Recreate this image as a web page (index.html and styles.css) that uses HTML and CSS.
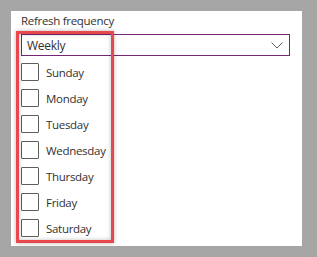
FILE: index.html
```html
<!DOCTYPE html>
<html lang="en">
<head>
    <meta charset="UTF-8">
    <title>Refresh frequency</title>
    <link rel="stylesheet" href="styles.css">
</head>
<body>
    <div class="panel">
        <div class="label">Refresh frequency</div>

        <!-- dropdown -->
        <div class="dropdown">
            <span class="dropdown-value">Weekly</span>
            <svg class="chevron" width="12" height="7" viewBox="0 0 12 7">
                <path d="M0.5 0.5 L6 6 L11.5 0.5" fill="none" stroke="#605e5c" stroke-width="1"/>
            </svg>
        </div>

        <!-- days -->
        <ul class="days">
            <li class="day"><span class="box"></span>Sunday</li>
            <li class="day"><span class="box"></span>Monday</li>
            <li class="day"><span class="box"></span>Tuesday</li>
            <li class="day"><span class="box"></span>Wednesday</li>
            <li class="day"><span class="box"></span>Thursday</li>
            <li class="day"><span class="box"></span>Friday</li>
            <li class="day"><span class="box"></span>Saturday</li>
        </ul>

        <!-- annotation highlight -->
        <div class="highlight"></div>
    </div>
</body>
</html>
```

FILE: styles.css
```css
/* base */
body {
    margin: 0;
    padding: 11px;
    background-color: #a6a6a6;
    font-family: "Open Sans", "Noto Sans", sans-serif;
    color: #323130;
}

.panel {
    position: relative;
    width: 291px;
    height: 235px;
    padding: 2px 0 0 10px;
    box-sizing: border-box;
    background-color: #fff;
}

.label {
    font-size: 11.5px;
    line-height: 16px;
    letter-spacing: -0.3px;
}

/* dropdown */
.dropdown {
    display: flex;
    align-items: center;
    justify-content: space-between;
    width: 269px;
    height: 22px;
    margin-top: 5px;
    padding: 0 6px 0 5px;
    box-sizing: border-box;
    border: 1px solid #742774;
}

.dropdown-value {
    font-size: 12px;
    letter-spacing: -0.3px;
}

.chevron {
    display: block;
}

/* list of days */
.days {
    list-style: none;
    margin: 7px 0 0;
    padding: 0;
    display: flex;
    flex-direction: column;
    gap: 8px;
}

.day {
    display: flex;
    align-items: center;
    height: 18px;
    font-size: 11.5px;
    letter-spacing: -0.3px;
}

.box {
    width: 18px;
    height: 18px;
    box-sizing: border-box;
    border: 1px solid #605e5c;
    border-radius: 1px;
    margin-right: 7px;
    flex-shrink: 0;
}

/* red annotation box */
.highlight {
    position: absolute;
    left: 5px;
    top: 20px;
    width: 98px;
    height: 212px;
    box-sizing: border-box;
    border: 3px solid #e8474c;
    box-shadow: 0 0 4px rgba(0, 0, 0, 0.3), inset 0 0 4px rgba(0, 0, 0, 0.25);
}
```
